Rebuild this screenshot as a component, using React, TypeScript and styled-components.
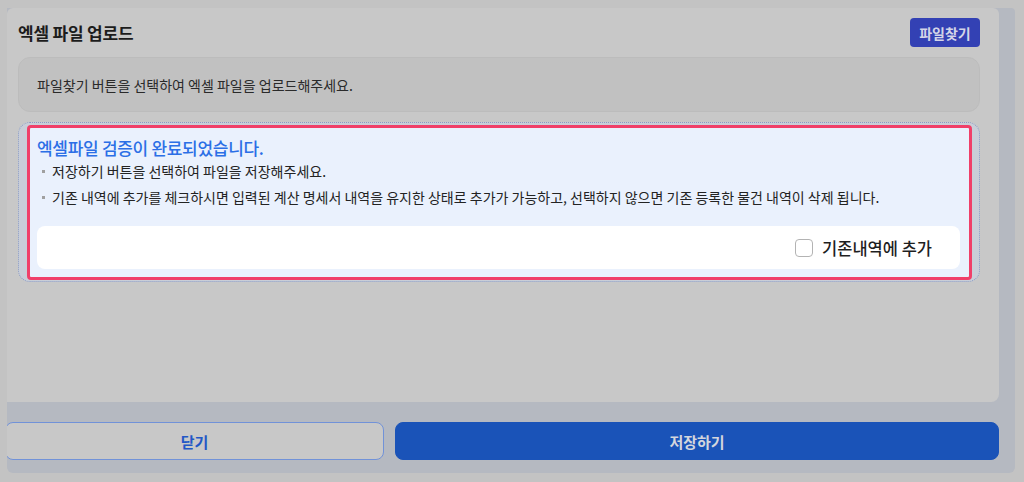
import React from 'react';
import styled, { createGlobalStyle } from 'styled-components';

const GlobalStyle = createGlobalStyle`
  html, body {
    margin: 0;
    padding: 0;
    background: #c3c3c3;
    font-family: 'Noto Sans CJK KR', 'Noto Sans', sans-serif;
  }
  * {
    box-sizing: border-box;
  }
`;

const Page = styled.div`
  width: 1024px;
  height: 482px;
  padding: 8px 9px 9px 7px;
  background: #c3c3c3;
`;

const Modal = styled.div`
  display: flex;
  flex-direction: column;
  height: 465px;
  background: #b5b9c1;
  border-radius: 0 4px 6px 6px;
  overflow: hidden;
`;

const Content = styled.div`
  flex: 1;
  margin-right: 16px;
  padding: 10px 19px 0 11px;
  background: #c8c8c8;
  border-radius: 6px 6px 8px 0;
`;

const Header = styled.div`
  display: flex;
  align-items: center;
  justify-content: space-between;
  height: 29px;
`;

const Title = styled.h2`
  margin: 0;
  font-size: 17px;
  font-weight: 700;
  color: #1c1c1c;
  letter-spacing: -0.2px;
`;

const FindButton = styled.button`
  width: 70px;
  height: 29px;
  border: none;
  border-radius: 4px;
  background: #3341b4;
  color: #d3d5e8;
  font-family: inherit;
  font-size: 14px;
  font-weight: 600;
  padding: 0;
`;

const InfoBox = styled.div`
  display: flex;
  align-items: center;
  height: 55px;
  margin-top: 10px;
  padding: 0 18px;
  border: 1px solid #bcbcbc;
  border-radius: 12px;
  background: #c1c1c1;
  font-size: 14px;
  color: #2a2a2a;
`;

const Spot = styled.div`
  margin-top: 10px;
  height: 160px;
  padding: 2px 7px 0 8px;
  border: 1px dotted #8a9ac2;
  border-radius: 12px;
  background: #c9ced8;
`;

const Highlight = styled.div`
  padding: 9px 9px 8px 7px;
  border: 3px solid #f03f69;
  border-radius: 4px;
  background: #eaf1fd;
`;

const Notice = styled.div`
  font-size: 17px;
  line-height: 22px;
  font-weight: 500;
  color: #2b6fe6;
  letter-spacing: -0.3px;
  margin-bottom: 1px;
`;

const Bullets = styled.ul`
  display: flex;
  flex-direction: column;
  gap: 4px;
  margin: 0;
  padding: 0;
  list-style: none;
`;

const Bullet = styled.li`
  display: flex;
  align-items: center;
  font-size: 14px;
  line-height: 22px;
  color: #232323;
  &::before {
    content: '';
    width: 3px;
    height: 3px;
    margin: 0 7px 0 5px;
    background: #a0a0a0;
    flex-shrink: 0;
  }
`;

const OptionBar = styled.div`
  display: flex;
  align-items: center;
  justify-content: flex-end;
  height: 43px;
  margin-top: 18px;
  padding-right: 28px;
  border-radius: 8px;
  background: #ffffff;
`;

const CheckLabel = styled.label`
  display: flex;
  align-items: center;
  gap: 9px;
  font-size: 16.5px;
  font-weight: 500;
  color: #1f1f1f;
  cursor: pointer;
`;

const Box = styled.span`
  width: 18px;
  height: 18px;
  border: 1px solid #b3b3b3;
  border-radius: 4px;
  background: #fff;
`;

const Footer = styled.div`
  display: flex;
  gap: 11px;
  height: 71px;
  padding: 20px 16px 13px 0;
`;

interface IActionProps {
  primary?: boolean;
}

const Action = styled.button<IActionProps>`
  height: 38px;
  border-radius: 8px;
  font-family: inherit;
  font-size: 15px;
  font-weight: 600;
  padding: 0;
  border: 1px solid ${(p) => (p.primary ? '#1a53b8' : '#7192d8')};
  background: ${(p) => (p.primary ? '#1a53b8' : '#c8c8c8')};
  color: ${(p) => (p.primary ? '#d3d6dd' : '#2257c6')};
`;

const CloseAction = styled(Action)`
  width: 379px;
  margin-left: -2px;
`;

const SaveAction = styled(Action)`
  flex: 1;
`;

export default function App() {
  return (
    <Page>
      <GlobalStyle />
      <Modal>
        <Content>
          <Header>
            <Title>엑셀 파일 업로드</Title>
            <FindButton>파일찾기</FindButton>
          </Header>
          <InfoBox>파일찾기 버튼을 선택하여 엑셀 파일을 업로드해주세요.</InfoBox>
          <Spot>
            <Highlight>
              <Notice>엑셀파일 검증이 완료되었습니다.</Notice>
              <Bullets>
                <Bullet>저장하기 버튼을 선택하여 파일을 저장해주세요.</Bullet>
                <Bullet>
                  기존 내역에 추가를 체크하시면 입력된 계산 명세서 내역을 유지한 상태로 추가가 가능하고, 선택하지 않으면 기존 등록한 물건 내역이 삭제 됩니다.
                </Bullet>
              </Bullets>
              <OptionBar>
                <CheckLabel>
                  <Box />
                  기존내역에 추가
                </CheckLabel>
              </OptionBar>
            </Highlight>
          </Spot>
        </Content>
        <Footer>
          <CloseAction>닫기</CloseAction>
          <SaveAction primary>저장하기</SaveAction>
        </Footer>
      </Modal>
    </Page>
  );
}
